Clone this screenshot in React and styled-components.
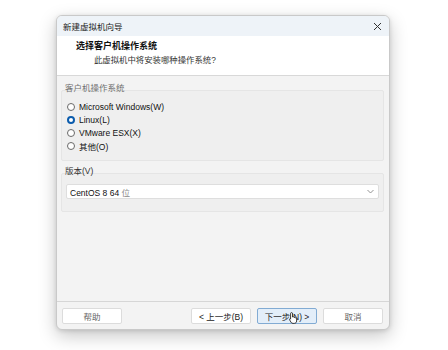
import React from "react";
import styled, { createGlobalStyle } from "styled-components";

const Global = createGlobalStyle`
  html, body { margin: 0; padding: 0; background: #ffffff; }
  body { font-family: "Liberation Sans", "Noto Sans CJK SC", sans-serif; color: #1a1a1a; }
  * { box-sizing: border-box; }
`;

const Page = styled.div`
  width: 448px;
  height: 350px;
  padding: 15px 0 0 56px;
  background: #fff;
`;

const Window = styled.div`
  width: 334px;
  height: 315px;
  display: flex;
  flex-direction: column;
  border: 1px solid #c9c9c9;
  border-radius: 6px;
  overflow: hidden;
  background: #f3f3f3;
  box-shadow: 0 6px 18px rgba(0, 0, 0, 0.22), 0 1px 4px rgba(0, 0, 0, 0.12);
`;

const TitleBar = styled.div`
  height: 20px;
  display: flex;
  align-items: center;
  justify-content: space-between;
  padding: 0 6px 0 6px;
  background: #eef3f8;
  font-size: 8.5px;
  color: #222;
`;

const CloseBtn = styled.span`
  width: 12px;
  height: 12px;
  display: flex;
  align-items: center;
  justify-content: center;
`;

const Header = styled.div`
  height: 40px;
  background: #ffffff;
  padding: 4px 0 0 19px;
  border-bottom: 1px solid #d8d8d8;
`;

const Heading = styled.div`
  font-weight: 700;
  font-size: 9px;
  line-height: 12px;
  color: #111;
`;

const Sub = styled.div`
  margin: 2px 0 0 18px;
  font-size: 8.4px;
  line-height: 12px;
  color: #333;
`;

const Body = styled.div`
  flex: 1;
  padding: 6px 5px 0 4px;
  display: flex;
  flex-direction: column;
`;

const GroupLabel = styled.div`
  font-size: 8.5px;
  line-height: 12px;
  padding-left: 4px;
  color: ${(p) => (p.$muted ? "#6f6f6f" : "#333")};
  margin-top: ${(p) => p.$gap || 0}px;
  position: relative;
`;

const GroupBox = styled.div`
  margin-top: -4px;
  background: #efefef;
  border: 1px solid #e5e5e5;
  border-radius: 2px;
  padding: ${(p) => p.$pad};
`;

const RadioRow = styled.label`
  height: 13px;
  display: flex;
  align-items: center;
  gap: 4px;
  font-size: 8.5px;
  color: #111;
`;

const RadioDot = styled.span`
  width: 8px;
  height: 8px;
  border-radius: 50%;
  flex: none;
  background: #fff;
  border: ${(p) => (p.$on ? "2.5px solid #0b5cad" : "1px solid #6a6a6a")};
`;

const Select = styled.div`
  height: 15px;
  display: flex;
  align-items: center;
  justify-content: space-between;
  background: #fff;
  border: 1px solid #dedede;
  border-radius: 2px;
  padding: 0 4px 0 3px;
  font-size: 8.5px;
  color: #111;
`;

const Muted = styled.span`
  color: #888;
`;

const Footer = styled.div`
  border-top: 1px solid #d6d6d6;
  padding: 6px 6px 0 5px;
  height: 28px;
  display: flex;
  gap: 6px;
`;

const Spacer = styled.div`
  flex: 1;
`;

const Button = styled.div`
  position: relative;
  width: 60px;
  height: 16px;
  display: flex;
  align-items: center;
  justify-content: center;
  font-size: 8.5px;
  color: ${(p) => (p.$dim ? "#666" : "#1a1a1a")};
  background: ${(p) => (p.$primary ? "#e3eef9" : "#ffffff")};
  border: 1px solid ${(p) => (p.$primary ? "#82abd3" : "#dcdcdc")};
  border-radius: 2px;
`;

const Cursor = styled.svg`
  position: absolute;
  left: 31px;
  top: 3px;
`;

const radios = [
  { label: "Microsoft Windows(W)", on: false },
  { label: "Linux(L)", on: true },
  { label: "VMware ESX(X)", on: false },
  { label: "其他(O)", on: false },
];

export default function App() {
  return (
    <>
      <Global />
      <Page>
        <Window>
          <TitleBar>
            <span>新建虚拟机向导</span>
            <CloseBtn>
              <svg width="9" height="9" viewBox="0 0 9 9">
                <path d="M1 1 L8 8 M8 1 L1 8" stroke="#333" strokeWidth="1" fill="none" />
              </svg>
            </CloseBtn>
          </TitleBar>
          <Header>
            <Heading>选择客户机操作系统</Heading>
            <Sub>此虚拟机中将安装哪种操作系统?</Sub>
          </Header>
          <Body>
            <GroupLabel $muted>客户机操作系统</GroupLabel>
            <GroupBox $pad="9px 0 8px 5px">
              {radios.map((r) => (
                <RadioRow key={r.label}>
                  <RadioDot $on={r.on} />
                  <span>{r.label}</span>
                </RadioRow>
              ))}
            </GroupBox>
            <GroupLabel $gap={4}>版本(V)</GroupLabel>
            <GroupBox $pad="10px 4px 12px 4px">
              <Select>
                <span>
                  CentOS 8 64 <Muted>位</Muted>
                </span>
                <svg width="7" height="5" viewBox="0 0 7 5">
                  <path d="M0.5 1 L3.5 4 L6.5 1" stroke="#888" strokeWidth="0.9" fill="none" />
                </svg>
              </Select>
            </GroupBox>
          </Body>
          <Footer>
            <Button $dim>帮助</Button>
            <Spacer />
            <Button>&lt; 上一步(B)</Button>
            <Button $primary>
              下一步(N) &gt;
              <Cursor width="9" height="12" viewBox="0 0 9 12">
                <path
                  d="M2.5 0.6 C3.2 0.6 3.5 1 3.5 1.6 L3.5 5 L4.2 4.8 C4.8 4.7 5.2 5 5.3 5.4 C5.9 5.2 6.4 5.5 6.5 6 C7.1 5.9 7.6 6.3 7.6 6.9 L7.6 9 C7.6 10.5 6.6 11.4 5.2 11.4 L4 11.4 C3 11.4 2.4 10.9 1.9 10.1 L0.6 7.8 C0.3 7.3 0.6 6.7 1.2 6.8 C1.4 6.8 1.6 7 1.6 7.1 L1.6 1.6 C1.6 1 1.9 0.6 2.5 0.6 Z"
                  fill="#fff"
                  stroke="#111"
                  strokeWidth="0.8"
                />
              </Cursor>
            </Button>
            <Button $dim>取消</Button>
          </Footer>
        </Window>
      </Page>
    </>
  );
}
